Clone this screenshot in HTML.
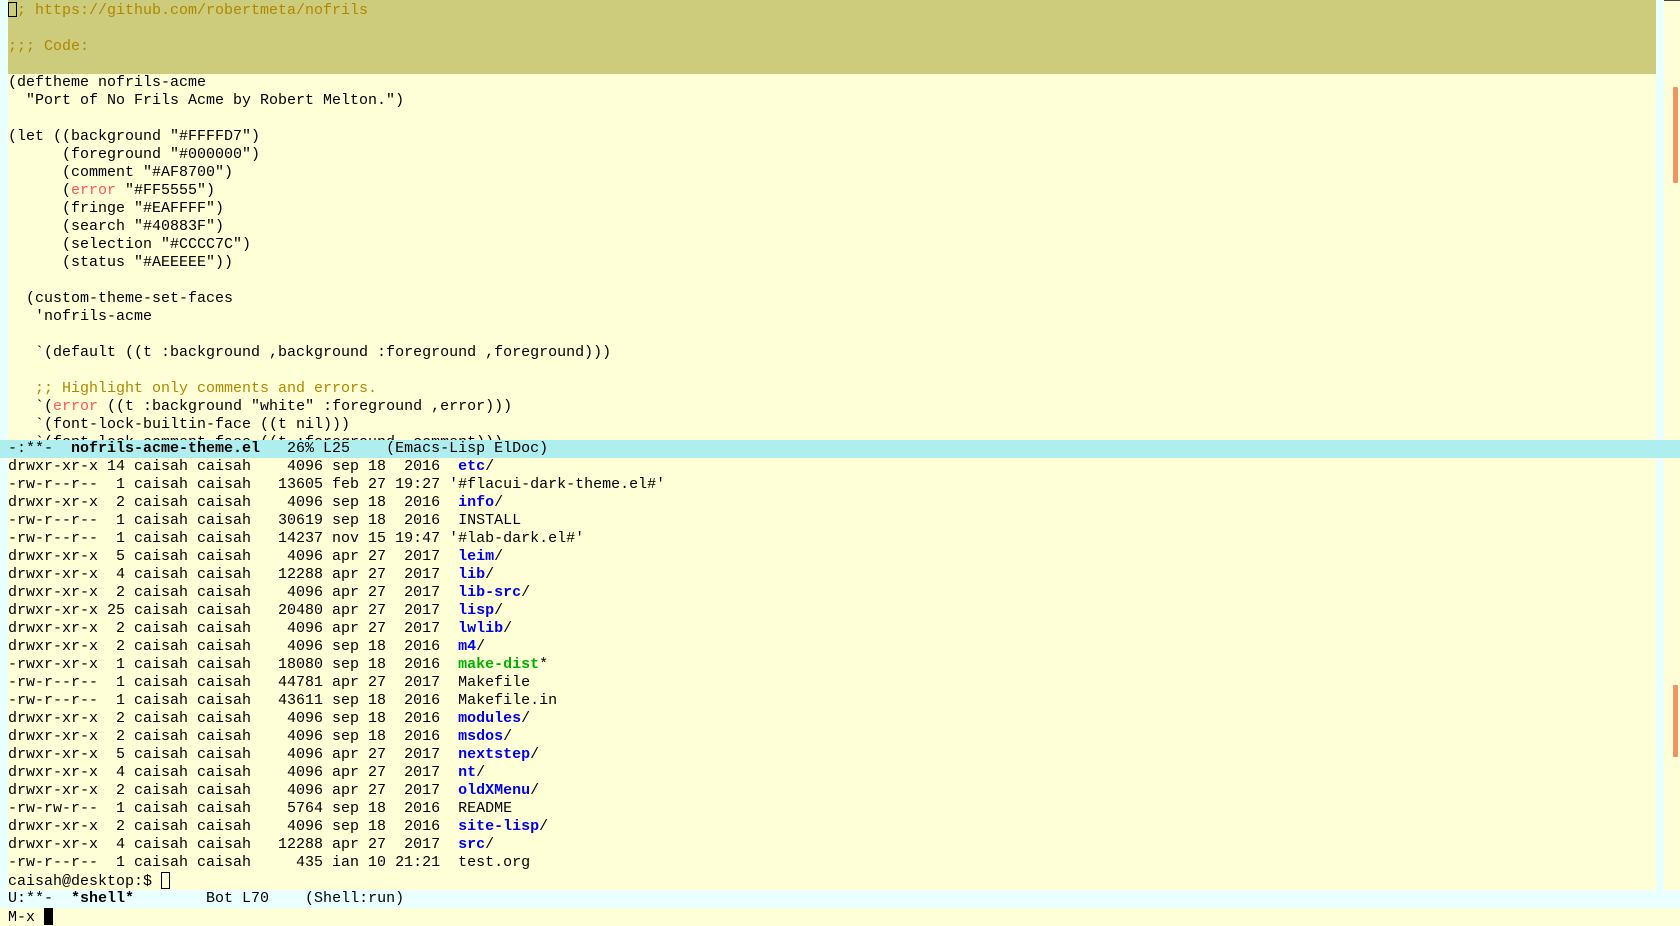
<!DOCTYPE html>
<html><head><meta charset="utf-8"><style>
html,body{margin:0;padding:0;width:1680px;height:926px;overflow:hidden;background:#FFFFD7;}
body{position:relative;font-family:"Liberation Mono","DejaVu Sans Mono",monospace;font-size:15px;color:#000;}
.win{position:absolute;left:0;width:1656px;overflow:hidden;}
.l{height:18px;line-height:18px;white-space:pre;padding-left:8px;}
.fr{position:absolute;left:0;width:8px;background:#EAFFFF;}
.rf{position:absolute;left:1656px;width:8px;background:#EAFFFF;}
.sel{background:#CCCC7C;}
.c{color:#AF8700;}
.e{color:#FF5555;}
.d{color:#0000EE;font-weight:bold;}
.x{color:#00B000;font-weight:bold;}
.ml{position:absolute;left:0;width:1680px;height:18px;line-height:18px;white-space:pre;padding-left:8px;box-sizing:border-box;}
.sb{position:absolute;left:1673px;width:5px;background:#F09468;border-radius:1px;}
.cur{display:inline-block;width:8px;height:15px;border:1px solid #000;box-sizing:border-box;vertical-align:-3px;}
</style></head><body>
<div style="position:absolute;left:0;top:0;width:1680px;height:1px;background:#444"></div>
<div class="win" style="top:0;height:440px;padding-top:2px;box-sizing:border-box;">
<div class="sel" style="position:absolute;left:0;top:0;width:1656px;height:74px;"></div>
<div style="position:relative">
<div class="l c"><span class="cur" style="width:9px"></span>; https://github.com/robertmeta/nofrils</div>
<div class="l"> </div>
<div class="l c">;;; Code:</div>
<div class="l"> </div>
<div class="l">(deftheme nofrils-acme</div>
<div class="l">  "Port of No Frils Acme by Robert Melton.")</div>
<div class="l"> </div>
<div class="l">(let ((background "#FFFFD7")</div>
<div class="l">      (foreground "#000000")</div>
<div class="l">      (comment "#AF8700")</div>
<div class="l">      (<span class="e">error</span> "#FF5555")</div>
<div class="l">      (fringe "#EAFFFF")</div>
<div class="l">      (search "#40883F")</div>
<div class="l">      (selection "#CCCC7C")</div>
<div class="l">      (status "#AEEEEE"))</div>
<div class="l"> </div>
<div class="l">  (custom-theme-set-faces</div>
<div class="l">   'nofrils-acme</div>
<div class="l"> </div>
<div class="l">   `(default ((t :background ,background :foreground ,foreground)))</div>
<div class="l"> </div>
<div class="l c">   ;; Highlight only comments and errors.</div>
<div class="l">   `(<span class="e">error</span> ((t :background "white" :foreground ,error)))</div>
<div class="l">   `(font-lock-builtin-face ((t nil)))</div>
<div class="l">   `(font-lock-comment-face ((t :foreground ,comment)))</div>
</div></div>
<div class="fr" style="top:0;height:440px;background:#EAFFFF"></div>
<div class="fr" style="top:0;height:74px;background:#EAFFFF"></div>
<div class="rf" style="top:0;height:440px"></div>
<div class="sb" style="top:87px;height:96px"></div>
<div class="ml" style="top:440px;background:#AEEEEE;">-:**-  <b>nofrils-acme-theme.el</b>   26% L25    (Emacs-Lisp ElDoc)</div>
<div class="win" style="top:458px;height:432px;">
<div class="l">drwxr-xr-x 14 caisah caisah    4096 sep 18  2016  <span class="d">etc</span>/</div>
<div class="l">-rw-r--r--  1 caisah caisah   13605 feb 27 19:27 '#flacui-dark-theme.el#'</div>
<div class="l">drwxr-xr-x  2 caisah caisah    4096 sep 18  2016  <span class="d">info</span>/</div>
<div class="l">-rw-r--r--  1 caisah caisah   30619 sep 18  2016  INSTALL</div>
<div class="l">-rw-r--r--  1 caisah caisah   14237 nov 15 19:47 '#lab-dark.el#'</div>
<div class="l">drwxr-xr-x  5 caisah caisah    4096 apr 27  2017  <span class="d">leim</span>/</div>
<div class="l">drwxr-xr-x  4 caisah caisah   12288 apr 27  2017  <span class="d">lib</span>/</div>
<div class="l">drwxr-xr-x  2 caisah caisah    4096 apr 27  2017  <span class="d">lib-src</span>/</div>
<div class="l">drwxr-xr-x 25 caisah caisah   20480 apr 27  2017  <span class="d">lisp</span>/</div>
<div class="l">drwxr-xr-x  2 caisah caisah    4096 apr 27  2017  <span class="d">lwlib</span>/</div>
<div class="l">drwxr-xr-x  2 caisah caisah    4096 sep 18  2016  <span class="d">m4</span>/</div>
<div class="l">-rwxr-xr-x  1 caisah caisah   18080 sep 18  2016  <span class="x">make-dist</span>*</div>
<div class="l">-rw-r--r--  1 caisah caisah   44781 apr 27  2017  Makefile</div>
<div class="l">-rw-r--r--  1 caisah caisah   43611 sep 18  2016  Makefile.in</div>
<div class="l">drwxr-xr-x  2 caisah caisah    4096 sep 18  2016  <span class="d">modules</span>/</div>
<div class="l">drwxr-xr-x  2 caisah caisah    4096 sep 18  2016  <span class="d">msdos</span>/</div>
<div class="l">drwxr-xr-x  5 caisah caisah    4096 apr 27  2017  <span class="d">nextstep</span>/</div>
<div class="l">drwxr-xr-x  4 caisah caisah    4096 apr 27  2017  <span class="d">nt</span>/</div>
<div class="l">drwxr-xr-x  2 caisah caisah    4096 apr 27  2017  <span class="d">oldXMenu</span>/</div>
<div class="l">-rw-rw-r--  1 caisah caisah    5764 sep 18  2016  README</div>
<div class="l">drwxr-xr-x  2 caisah caisah    4096 sep 18  2016  <span class="d">site-lisp</span>/</div>
<div class="l">drwxr-xr-x  4 caisah caisah   12288 apr 27  2017  <span class="d">src</span>/</div>
<div class="l">-rw-r--r--  1 caisah caisah     435 ian 10 21:21  test.org</div>
<div class="l">caisah@desktop:$ <span class="cur" style="width:9px;height:17px;vertical-align:-4px"></span></div>
</div>
<div class="fr" style="top:458px;height:432px"></div>
<div class="rf" style="top:458px;height:432px"></div>
<div class="sb" style="top:685px;height:72px"></div>
<div class="ml" style="top:890px;background:#EAFFFF;">U:**-  <b>*shell*</b>        Bot L70    (Shell:run)</div>
<div class="l" style="position:absolute;top:908px;left:0;">M-x <span style="display:inline-block;width:9px;height:17px;background:#000;vertical-align:-4px"></span></div>
</body></html>
